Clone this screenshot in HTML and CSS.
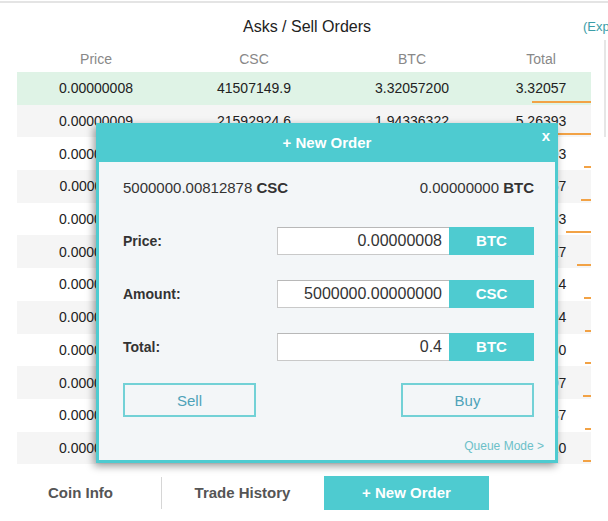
FILE: index.html
```html
<!DOCTYPE html>
<html lang="en">
<head>
    <meta charset="UTF-8">
    <meta name="viewport" content="width=device-width, initial-scale=1.0">
    <title>Asks / Sell Orders</title>
    <link rel="stylesheet" href="styles.css">
</head>
<body>
    <div class="page">
        <div class="title-row">
            <h2>Asks / Sell Orders</h2>
            <a class="export">(Export)</a>
        </div>
        <div class="scroll-thumb"></div>

        <!-- Order book -->
        <div class="orders">
            <div class="order-head">
                <span>Price</span><span>CSC</span><span>BTC</span><span>Total</span>
            </div>
            <div class="order-row mine"><span>0.00000008</span><span>41507149.9</span><span>3.32057200</span><span>3.32057</span><i class="depth" style="width:59px"></i></div>
            <div class="order-row"><span>0.00000009</span><span>21592924.6</span><span>1.94336322</span><span>5.26393</span><i class="depth" style="width:40px"></i></div>
            <div class="order-row"><span>0.00000010</span><span>12000000.0</span><span>1.20000000</span><span>6.46393</span><i class="depth" style="width:7px"></i></div>
            <div class="order-row"><span>0.00000011</span><span>13158545.4</span><span>1.44744000</span><span>6.60867</span><i class="depth" style="width:10px"></i></div>
            <div class="order-row"><span>0.00000012</span><span>42688333.3</span><span>5.12260000</span><span>7.12093</span><i class="depth" style="width:25px"></i></div>
            <div class="order-row"><span>0.00000013</span><span>21018461.5</span><span>2.73240000</span><span>7.39417</span><i class="depth" style="width:14px"></i></div>
            <div class="order-row"><span>0.00000014</span><span>9569285.7</span><span>1.33970000</span><span>7.52814</span><i class="depth" style="width:7px"></i></div>
            <div class="order-row"><span>0.00000015</span><span>7453333.3</span><span>1.11800000</span><span>7.63994</span><i class="depth" style="width:6px"></i></div>
            <div class="order-row"><span>0.00000016</span><span>7022500.0</span><span>1.12360000</span><span>7.75230</span><i class="depth" style="width:6px"></i></div>
            <div class="order-row"><span>0.00000017</span><span>9398235.2</span><span>1.59770000</span><span>7.91207</span><i class="depth" style="width:8px"></i></div>
            <div class="order-row"><span>0.00000018</span><span>6377777.7</span><span>1.14800000</span><span>8.02687</span><i class="depth" style="width:6px"></i></div>
            <div class="order-row"><span>0.00000019</span><span>5963157.8</span><span>1.13230000</span><span>8.14010</span><i class="depth" style="width:8px"></i></div>
        </div>

        <!-- Tabs -->
        <div class="tabs">
            <div class="tab">Coin Info</div>
            <div class="tab divided">Trade History</div>
            <div class="tab-button">+ New Order</div>
        </div>

        <!-- New order modal -->
        <div class="modal">
            <div class="modal-head">
                + New Order
                <span class="close">x</span>
            </div>
            <div class="modal-body">
                <div class="balances">
                    <span>5000000.00812878 <b>CSC</b></span>
                    <span>0.00000000 <b>BTC</b></span>
                </div>

                <div class="field">
                    <label>Price:</label>
                    <div class="input-group">
                        <div class="input">0.00000008</div>
                        <div class="unit">BTC</div>
                    </div>
                </div>
                <div class="field">
                    <label>Amount:</label>
                    <div class="input-group">
                        <div class="input">5000000.00000000</div>
                        <div class="unit">CSC</div>
                    </div>
                </div>
                <div class="field">
                    <label>Total:</label>
                    <div class="input-group">
                        <div class="input">0.4</div>
                        <div class="unit">BTC</div>
                    </div>
                </div>

                <div class="actions">
                    <button>Sell</button>
                    <button>Buy</button>
                </div>
                <div class="queue">Queue Mode &gt;</div>
            </div>
        </div>
    </div>
</body>
</html>
```

FILE: styles.css
```css
body {
    font-family: "Liberation Sans", Arial, sans-serif;
    margin: 0;
    background-color: #fff;
    color: #222;
    overflow: hidden;
}
.page {
    position: relative;
    margin-top: 1px;
    border-top: 2px solid #e4e4e4;
    height: 518px;
}
.title-row {
    position: relative;
    height: 42px;
    padding-top: 6px;
    box-sizing: border-box;
    display: flex;
    align-items: center;
    justify-content: center;
}
.title-row h2 {
    margin: 0 0 0 6px;
    font-size: 16px;
    font-weight: normal;
    color: #222;
}
.export {
    position: absolute;
    left: 583px;
    top: 16px;
    font-size: 13px;
    color: #3c9ea8;
    white-space: nowrap;
}
.scroll-thumb {
    position: absolute;
    left: 604px;
    top: 37px;
    width: 2px;
    height: 97px;
    background-color: #e6e6e6;
}
.orders {
    margin: 0 17px;
}
.order-head, .order-row {
    display: grid;
    grid-template-columns: 158px 158px 158px 100px;
    align-items: center;
    text-align: center;
    font-size: 14px;
}
.order-head {
    height: 27px;
    color: #888;
}
.order-row {
    position: relative;
    height: 32.7px;
}
.order-row:nth-child(odd) {
    background-color: #f5f5f5;
}
.order-row.mine {
    background-color: #dff3e6;
}
.depth {
    position: absolute;
    right: 0;
    bottom: 2px;
    height: 2px;
    background-color: #f2a245;
}
.tabs {
    display: flex;
    align-items: center;
    margin-top: 12px;
    height: 34px;
}
.tab {
    width: 161px;
    line-height: 32px;
    text-align: center;
    font-size: 15px;
    font-weight: bold;
    color: #555;
}
.tab.divided {
    border-left: 1px solid #d6d6d6;
}
.tab-button {
    width: 165px;
    margin-left: 1px;
    line-height: 34px;
    text-align: center;
    font-size: 15px;
    font-weight: bold;
    color: #fff;
    background-color: #4ecbd0;
}
.modal {
    position: absolute;
    left: 96px;
    top: 120px;
    width: 462px;
    height: 340px;
    box-sizing: border-box;
    border: 3px solid #4ecbd0;
    border-top: none;
    background-color: #f3f6f8;
    box-shadow: -2px 3px 8px rgba(0, 0, 0, 0.4);
    display: flex;
    flex-direction: column;
}
.modal-head {
    position: relative;
    height: 39px;
    margin: 0 -3px;
    background-color: #4ecbd0;
    color: #fff;
    font-size: 15px;
    font-weight: bold;
    text-align: center;
    line-height: 39px;
}
.close {
    position: absolute;
    right: 8px;
    top: -7px;
    font-size: 15px;
}
.modal-body {
    padding: 0 21px 0 24px;
}
.balances {
    display: flex;
    justify-content: space-between;
    margin-top: 16px;
    line-height: 20px;
    font-size: 15px;
    color: #333;
}
.field {
    display: flex;
    justify-content: space-between;
    align-items: center;
    height: 28px;
    margin-top: 25px;
}
.balances + .field {
    margin-top: 29px;
}
.field label {
    font-size: 14px;
    font-weight: bold;
    color: #333;
}
.input-group {
    display: flex;
    width: 257px;
    height: 28px;
}
.input {
    width: 172px;
    box-sizing: border-box;
    border: 1px solid #c9c9c9;
    border-top-color: #b8b8b8;
    border-right: none;
    background-color: #fff;
    text-align: right;
    padding-right: 7px;
    font-size: 16px;
    line-height: 26px;
    color: #333;
}
.unit {
    flex: 1;
    background-color: #4ecbd0;
    color: #fff;
    font-size: 15px;
    font-weight: bold;
    text-align: center;
    line-height: 28px;
}
.actions {
    display: flex;
    justify-content: space-between;
    margin-top: 22px;
}
.actions button {
    width: 133px;
    height: 34px;
    border: 2px solid #72d1d6;
    background-color: transparent;
    font-family: "Liberation Sans", Arial, sans-serif;
    font-size: 15px;
    color: #4ea3b8;
}
.queue {
    margin: 21px -10px 0 0;
    text-align: right;
    font-size: 12px;
    line-height: 16px;
    color: #6cc0c8;
}
```
